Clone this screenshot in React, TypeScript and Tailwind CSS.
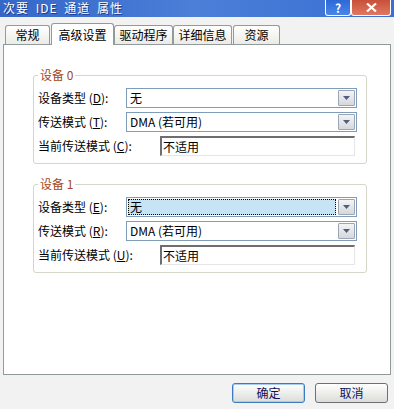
import React from "react";

const FONT = { fontFamily: '"Noto Sans CJK SC", "Noto Sans", sans-serif' };

function Ul({ c }: { c: string }) {
  return <span className="underline underline-offset-[1px]">{c}</span>;
}

function Combo({ text, focused }: { text: string; focused?: boolean }) {
  return (
    <div className="flex h-[20px] w-[231px] border border-[#7f9db9] bg-white p-[1px]">
      <div className="flex flex-1 items-center pr-[2px]">
        {focused ? (
          <div className="flex h-full w-full items-center border border-dotted border-black bg-[#c5e4f6] pl-[1px] text-[12px] leading-none text-black">
            {text}
          </div>
        ) : (
          <div className="flex h-full w-full items-center pl-[2px] text-[12px] leading-none text-black">{text}</div>
        )}
      </div>
      <div className="flex h-full w-[17px] items-center justify-center rounded-[1px] border border-[#9aa6b8] bg-gradient-to-b from-[#f4f4f4] to-[#d6d8dc]">
        <svg width="7" height="4" viewBox="0 0 7 4">
          <path d="M0 0 H7 L3.5 4 Z" fill="#4d5f82" />
        </svg>
      </div>
    </div>
  );
}

function ReadOnly({ text }: { text: string }) {
  return (
    <div className="ml-[34px] flex h-[20px] w-[195px] items-center border-t-2 border-l-2 border-r border-b border-t-[#6e6e6e] border-l-[#6e6e6e] border-r-[#e6e6e6] border-b-[#e6e6e6] bg-white pl-[1px] text-[12px] leading-none text-black">
      {text}
    </div>
  );
}

function Group({
  title,
  k1,
  k2,
  k3,
  focused,
  className,
}: {
  title: string;
  k1: string;
  k2: string;
  k3: string;
  focused?: boolean;
  className?: string;
}) {
  return (
    <div className={"relative w-[334px] rounded-[3px] border border-[#d5d5c8] pl-[4px] pt-[12px] pb-[7px] " + (className ?? "")}>
      <div className="absolute -top-[8px] left-[4px] bg-white px-[2px] text-[12px] leading-[14px] text-[#a44620]">{title}</div>
      <div className="flex flex-col gap-[4px]">
        <div className="flex items-center">
          <div className="w-[88px] whitespace-nowrap text-[12px] leading-none text-black">
            设备类型 (<Ul c={k1} />):
          </div>
          <Combo text="无" focused={focused} />
        </div>
        <div className="flex items-center">
          <div className="w-[88px] whitespace-nowrap text-[12px] leading-none text-black">
            传送模式 (<Ul c={k2} />):
          </div>
          <Combo text="DMA (若可用)" />
        </div>
        <div className="flex items-center">
          <div className="w-[88px] whitespace-nowrap text-[12px] leading-none text-black">
            当前传送模式 (<Ul c={k3} />):
          </div>
          <ReadOnly text="不适用" />
        </div>
      </div>
    </div>
  );
}

function Tab({ label, w, selected, className }: { label: string; w: string; selected?: boolean; className?: string }) {
  return (
    <div
      className={
        "flex items-center justify-center rounded-t-[3px] border border-b-0 border-[#919b9c] text-[12px] leading-none text-black " +
        (selected ? "relative z-10 -mb-px h-[22px] bg-white " : "h-[19px] bg-gradient-to-b from-white to-[#ebebe6] ") +
        w +
        " " +
        (className ?? "")
      }
    >
      {label}
    </div>
  );
}

function TitleButton({ kind }: { kind: "help" | "close" }) {
  if (kind === "help") {
    return (
      <div className="flex h-[16px] w-[26px] items-center justify-center rounded-b-[3px] border border-t-0 border-white bg-gradient-to-b from-[#2d68d8] to-[#4a86e8] text-[12px] font-bold leading-[12px] text-white">
        ?
      </div>
    );
  }
  return (
    <div className="flex h-[16px] w-[40px] items-center justify-center rounded-b-[3px] border border-t-0 border-white bg-gradient-to-b from-[#c8503a] to-[#e07860]">
      <svg width="11" height="9" viewBox="0 0 11 9">
        <path d="M1 0.5 L10 8.5 M10 0.5 L1 8.5" stroke="white" strokeWidth="2.2" />
      </svg>
    </div>
  );
}

export default function App() {
  return (
    <div className="flex h-[409px] w-[394px] flex-col overflow-hidden bg-[#f2f2f2]" style={FONT}>
      {/* title bar */}
      <div className="flex h-[17px] items-start justify-between bg-gradient-to-r from-[#3567c8] via-[#4b7fd8] to-[#3a6fd4] pl-[3px] pr-[3px]">
        <div className="flex h-[16px] items-center whitespace-nowrap text-[12px] leading-[14px] tracking-[1px] text-white [word-spacing:3px] [text-shadow:1px_1px_0_#1c3c8c]">
          次要 IDE 通道 属性
        </div>
        <div className="flex">
          <TitleButton kind="help" />
          <TitleButton kind="close" />
        </div>
      </div>

      {/* tabs */}
      <div className="mt-[5px] flex h-[22px] items-end pl-[5px]">
        <Tab label="常规" w="w-[45px]" />
        <Tab label="高级设置" w="w-[63px]" selected className="ml-[1px]" />
        <Tab label="驱动程序" w="w-[59px]" />
        <Tab label="详细信息" w="w-[59px]" />
        <Tab label="资源" w="w-[47px]" className="ml-[1px]" />
      </div>

      {/* panel */}
      <div className="ml-[3px] flex h-[331px] w-[388px] flex-col border border-[#919b9c] bg-white pl-[29px] pt-[30px]">
        <Group title="设备 0" k1="D" k2="T" k3="C" />
        <Group title="设备 1" k1="E" k2="R" k3="U" focused className="mt-[20px]" />
      </div>

      {/* buttons */}
      <div className="mt-[8px] flex justify-end gap-[10px] pr-[6px]">
        <button className="flex h-[20px] w-[73px] items-center justify-center rounded-[3px] border border-[#3b7bbf] bg-gradient-to-b from-white to-[#dcdcd8] text-[12px] leading-none text-[#10105a] shadow-[inset_0_0_0_1px_#a8cdf0]">
          确定
        </button>
        <button className="flex h-[20px] w-[73px] items-center justify-center rounded-[3px] border border-[#6f6f6f] bg-gradient-to-b from-white to-[#dcdcd8] text-[12px] leading-none text-[#10105a]">
          取消
        </button>
      </div>
    </div>
  );
}
